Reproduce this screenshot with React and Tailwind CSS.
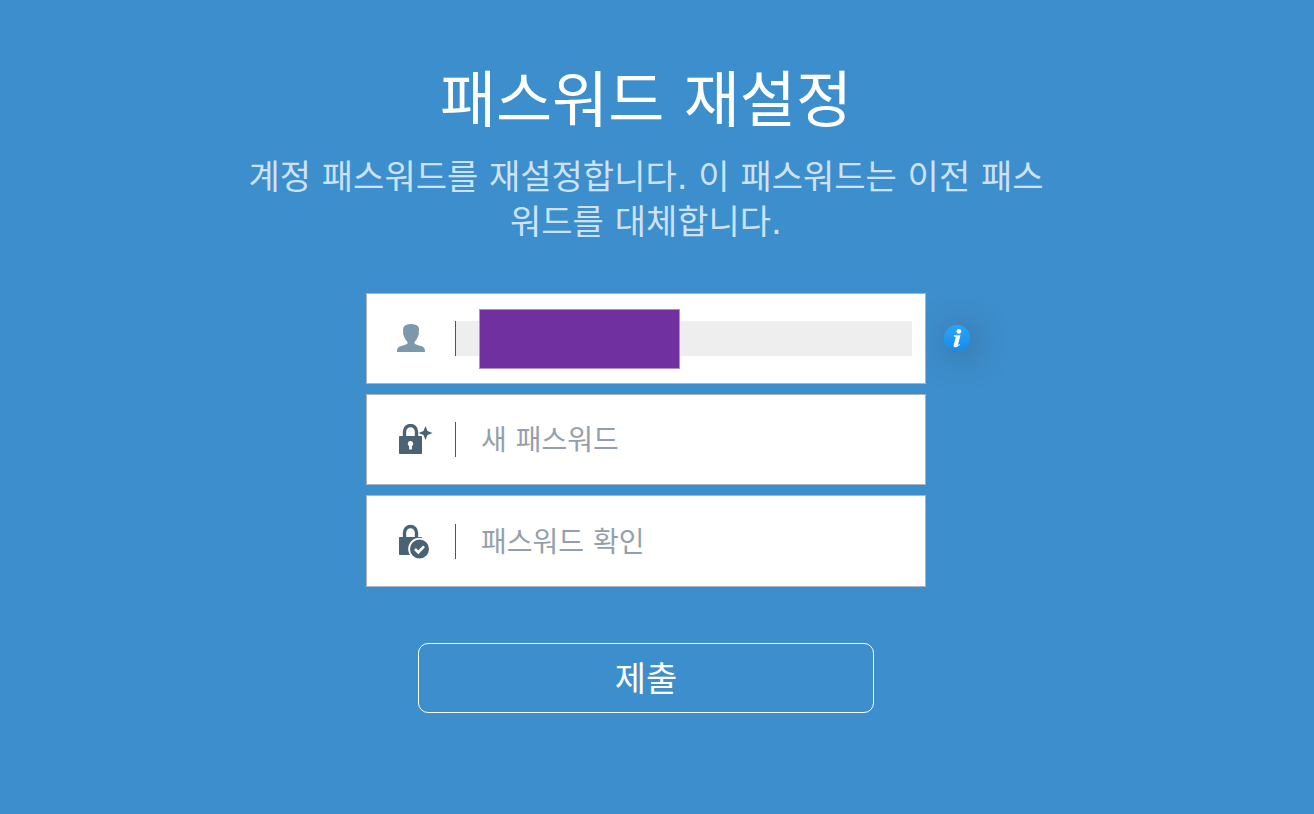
import { useState } from "react";

function UserIcon() {
    return (
        <svg width="28" height="30" viewBox="0 0 28 30" fill="#7d98ab" aria-hidden="true">
            <path d="M6.4 3.6C7.2 1.2 10 0 14 0c4.200 0 7 1.200 7.800 3.800.4 1.600.1 3.200-.1 4.700.5.7.2 2.200-.5 3.100-.4 2-1.500 3.900-2.900 5.300-1.300 1.200-1.200 2.600.2 3.400 2.500 1.200 6.400 1.500 8.200 3.100.9.8 1.300 2.400 1.300 4.600H0c0-2.200.4-3.800 1.300-4.600 1.800-1.600 5.700-1.900 8.200-3.100 1.400-.8 1.500-2.200.2-3.400-1.400-1.400-2.500-3.300-2.900-5.300-.7-.9-1-2.400-.5-3.100-.2-1.500-.4-3.300.1-4.900Z" />
        </svg>
    );
}

function NewPasswordIcon() {
    return (
        <svg width="36" height="32" viewBox="-2 1 36 32" fill="#4a6274" aria-hidden="true">
            <path d="M5.500 14V8.500a6 6 0 0 1 12 0V14" fill="none" stroke="#4a6274" strokeWidth="3.400" />
            <rect x="0" y="13" width="23" height="18" rx="0.800" />
            <path
                d="M11.500 18a2.800 2.800 0 0 0-1.400 5.200V26.500h2.800v-3.300A2.800 2.800 0 0 0 11.500 18Z"
                fill="#fff"
            />
            <path d="M26.500 3l2 4.900 5 2.100-5 2.100-2 4.900-2-4.900-5-2.100 5-2.100Z" />
        </svg>
    );
}

function ConfirmPasswordIcon() {
    return (
        <svg width="36" height="36" viewBox="-2 0 36 36" fill="#4a6274" aria-hidden="true">
            <path d="M5.500 15V9.500a6 6 0 0 1 12 0V15" fill="none" stroke="#4a6274" strokeWidth="3.400" />
            <rect x="0" y="14" width="23" height="18" rx="0.800" />
            <circle cx="20.500" cy="26" r="10.400" stroke="#fff" strokeWidth="1.800" />
            <path d="m16 26 3.300 3.300 5.700-6" fill="none" stroke="#fff" strokeWidth="2.600" />
        </svg>
    );
}

function InfoIcon() {
    return (
        <svg width="26" height="26" viewBox="0 0 26 26" aria-hidden="true">
            <defs>
                <linearGradient id="info-fill" x1="0" y1="0" x2="0" y2="1">
                    <stop offset="0" stopColor="#2ba4fb" />
                    <stop offset="1" stopColor="#168cea" />
                </linearGradient>
            </defs>
            <circle cx="13" cy="13" r="13" fill="url(#info-fill)" />
            <circle cx="14.900" cy="6.400" r="2.400" fill="#fff" />
            <path
                d="M10 10.200h6.500L14 19.400c-.2.800.2.800 1.400-.4l.7.600c-2 2.900-7.200 4.200-6.400.5l2.100-7.900c.1-.5-.6-.8-2-.8Z"
                fill="#fff"
            />
        </svg>
    );
}

function Field({ id, label, icon, children }) {
    return (
        <div className="relative flex items-center bg-white border border-[#aab4c0] py-[27px] pl-[30px] pr-[13px]">
            <label htmlFor={id} aria-label={label} className="w-[58px] shrink-0">
                {icon}
            </label>
            {children}
        </div>
    );
}

const inputStyle =
    "h-[35px] w-full min-w-0 border-l border-[#4b5563] pl-[25px] pt-[3px] text-[28px] text-gray-700 outline-none placeholder:text-[#959fac]";

export default function App() {
    const [password, setPassword] = useState("");
    const [confirmation, setConfirmation] = useState("");

    return (
        <main className="min-h-screen bg-[#3d8ecd] pt-[57px] pb-16 pr-[22px] font-['DejaVu_Sans','Noto_Sans_CJK_KR',sans-serif] text-white">
            {/* Heading */}
            <header className="mx-auto max-w-[820px] text-center">
                <h1 className="text-[61px] leading-[88px]">패스워드 재설정</h1>
                <p className="mt-[10px] text-[34px] leading-[45px] text-[#cde3f5]">
                    계정 패스워드를 재설정합니다. 이 패스워드는 이전 패스워드를
                    대체합니다.
                </p>
            </header>

            <form
                className="mx-auto mt-12 max-w-[560px]"
                onSubmit={(e) => e.preventDefault()}
            >
                <div className="flex flex-col gap-[10px]">
                    <div className="relative">
                        <Field id="account" label="계정" icon={<UserIcon />}>
                            <input
                                id="account"
                                type="text"
                                readOnly
                                className={`${inputStyle} bg-[#eeeeee]`}
                            />
                            {/* Hides the account name */}
                            <span className="absolute left-[112px] top-[15px] h-[60px] w-[201px] border border-[#b08fd0] bg-[#7030a0]" />
                        </Field>
                        <button
                            type="button"
                            aria-label="정보"
                            className="absolute left-full top-8 ml-[18px] rounded-full shadow-[4px_4px_32px_rgba(50,60,70,0.5)]"
                        >
                            <InfoIcon />
                        </button>
                    </div>

                    <Field id="password" label="새 패스워드" icon={<NewPasswordIcon />}>
                        <input
                            id="password"
                            type="password"
                            placeholder="새 패스워드"
                            value={password}
                            onChange={(e) => setPassword(e.target.value)}
                            className={inputStyle}
                        />
                    </Field>

                    <Field id="confirmation" label="패스워드 확인" icon={<ConfirmPasswordIcon />}>
                        <input
                            id="confirmation"
                            type="password"
                            placeholder="패스워드 확인"
                            value={confirmation}
                            onChange={(e) => setConfirmation(e.target.value)}
                            className={inputStyle}
                        />
                    </Field>
                </div>

                <div className="mt-[56px] px-[52px]">
                    <button
                        type="submit"
                        className="h-[70px] w-full rounded-[10px] border border-white pt-[2px] text-[34px] leading-[45px]"
                    >
                        제출
                    </button>
                </div>
            </form>
        </main>
    );
}
